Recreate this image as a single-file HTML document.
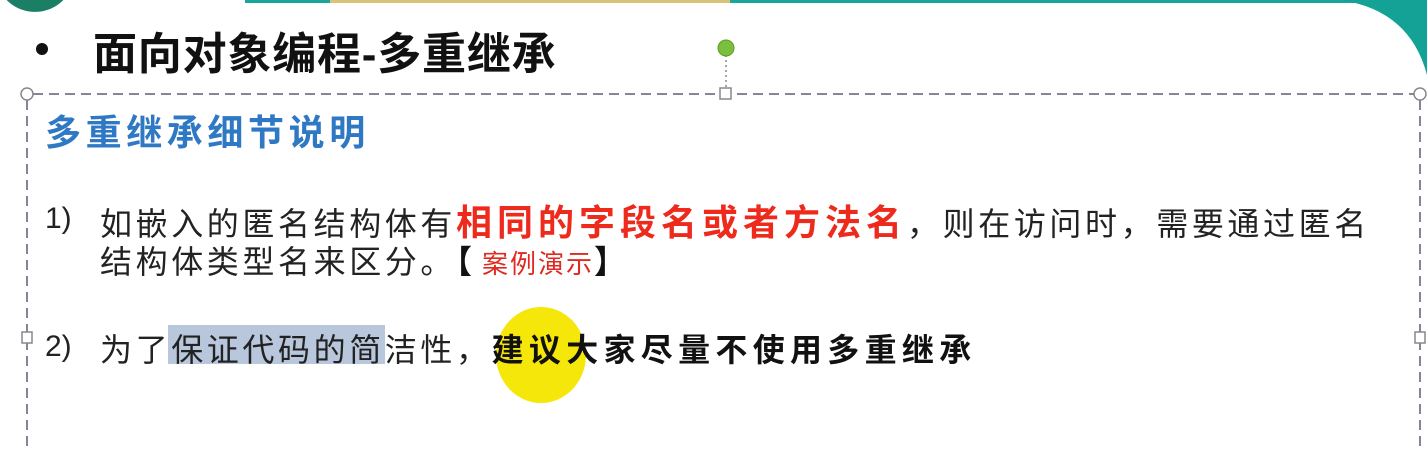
<!DOCTYPE html>
<html><head><meta charset="utf-8"><style>
body{margin:0;width:1427px;height:451px;overflow:hidden;background:#fff;position:relative;font-family:"Liberation Sans","Noto Sans CJK SC",sans-serif;}
.a{position:absolute;white-space:nowrap;}
.t{font-size:32px;letter-spacing:3.6px;color:#222;}
.n{font-family:"Liberation Sans",sans-serif;font-size:30px;letter-spacing:0;color:#222;}
</style></head><body>
<svg class="a" style="left:0;top:0" width="1427" height="451">
<rect x="245" y="0" width="1182" height="3" fill="#1aa59a"/>
<rect x="330" y="0" width="400" height="3" fill="#d9c27a"/>
<path d="M1340 0 L1427 0 L1427 75 Q1410 10 1340 0 Z" fill="#14a296"/>
<path d="M2 -20 A34 34 0 0 0 68 -20" stroke="#1b7f66" stroke-width="12" fill="none"/>
<g stroke="#7f8799" stroke-width="2" stroke-dasharray="10 6" fill="none">
<line x1="33" y1="94" x2="1414" y2="94"/>
<line x1="27" y1="100" x2="27" y2="451"/>
<line x1="1420" y1="100" x2="1420" y2="451"/>
</g>
<line x1="726" y1="55" x2="726" y2="90" stroke="#888" stroke-width="1.5" stroke-dasharray="2 3"/>
<circle cx="726" cy="48" r="8" fill="#7cbf3e" stroke="#5a9a2a"/>
<g fill="#fff" stroke="#888" stroke-width="1.5">
<circle cx="27" cy="94" r="6"/><circle cx="1420" cy="94" r="6"/>
<rect x="720" y="88" width="11" height="11"/>
<rect x="22" y="332" width="10" height="11"/><rect x="1415" y="332" width="10" height="11"/>
</g>
<circle cx="42" cy="49" r="6" fill="#111"/>
<rect x="168" y="325" width="217" height="39" fill="#b8c7dc"/>
<ellipse cx="541" cy="355" rx="45" ry="48" fill="#f6e70a"/>
</svg>
<div class="a" style="left:93px;top:18px;font-size:44px;font-weight:bold;color:#111;letter-spacing:0.8px">面向对象编程-多重继承</div>
<div class="a" style="left:45px;top:104px;font-size:36px;font-weight:bold;color:#2f78c4;letter-spacing:4.6px">多重继承细节说明</div>
<div class="a n" style="left:45px;top:202px">1)</div>
<div class="a t" style="left:100px;top:194px">如嵌入的匿名结构体有<span style="color:#ee2a1c;font-weight:bold;font-size:36px;letter-spacing:5px">相同的字段名或者方法名</span>，则在访问时，需要通过匿名</div>
<div class="a t" style="left:100px;top:237px">结构体类型名来区分。<span style="color:#111;font-weight:bold;letter-spacing:10px">【</span><span style="color:#e02a20;font-size:26px;letter-spacing:2px">案例演示</span><span style="color:#111;font-weight:bold">】</span></div>
<div class="a n" style="left:45px;top:330px">2)</div>
<div class="a t" style="left:100px;top:325px">为了保证代码的简洁性，<span style="font-weight:bold;color:#111;letter-spacing:5.3px">建议大家尽量不使用多重继承</span></div>
</body></html>
